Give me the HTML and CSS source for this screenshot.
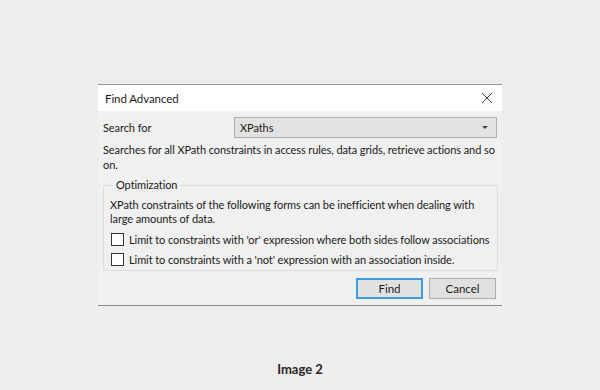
FILE: index.html
```html
<!DOCTYPE html>
<html lang="en">

<head>
    <meta charset="utf-8">
    <title>Find Advanced</title>
    <link rel="stylesheet" href="styles.css">
</head>

<body>
    <div class="dialog">
        <div class="title-bar">
            <span>Find Advanced</span>
            <svg class="close-icon" width="12" height="12" viewBox="0 0 12 12">
                <path d="M1 1 L11 11 M11 1 L1 11" stroke="#444" stroke-width="1" fill="none" />
            </svg>
        </div>
        <div class="dialog-body">
            <div class="search-row">
                <span class="search-label">Search for</span>
                <div class="combo">
                    <span>XPaths</span>
                    <span class="combo-arrow"></span>
                </div>
            </div>
            <p class="description">Searches for all XPath constraints in access rules, data grids, retrieve actions and so on.</p>
            <fieldset class="group">
                <legend>Optimization</legend>
                <p class="group-text">XPath constraints of the following forms can be inefficient when dealing with large amounts of data.</p>
                <label class="check-row"><span class="check-box"></span>Limit to constraints with 'or' expression where both sides follow associations</label>
                <label class="check-row"><span class="check-box"></span>Limit to constraints with a 'not' expression with an association inside.</label>
            </fieldset>
            <div class="buttons">
                <button class="btn btn-default">Find</button>
                <button class="btn">Cancel</button>
            </div>
        </div>
    </div>
    <div class="caption">Image 2</div>
</body>

</html>
```

FILE: styles.css
```css
body,
html {
    padding: 0;
    margin: 0;
    height: 100%;
    background-color: #eeedeb;
    font-family: Lato, "Noto Sans", sans-serif;
}

.dialog {
    width: 404px;
    height: 222px;
    margin: 84px 0 0 98px;
    background-color: #f0f0f0;
    border-top: 1px solid #9a9a9a;
    border-bottom: 1px solid #8a8a8a;
    font-size: 11px;
    letter-spacing: -0.08px;
    color: #1a1a1a;
    box-sizing: border-box;
}

.title-bar {
    height: 26px;
    background-color: #ffffff;
    display: flex;
    align-items: center;
    justify-content: space-between;
    padding: 0 9px 0 7px;
    font-size: 11.5px;
}

.close-icon {
    display: block;
}

.dialog-body {
    padding: 6px 5px 0 5px;
}

.search-row {
    display: flex;
    align-items: center;
    height: 21px;
}

.search-label {
    width: 131px;
}

.combo {
    flex: 1;
    height: 21px;
    box-sizing: border-box;
    border: 1px solid #adadad;
    background-color: #e2e2e2;
    display: flex;
    align-items: center;
    justify-content: space-between;
    padding: 0 8px 0 5px;
}

.combo-arrow {
    width: 0;
    height: 0;
    border-left: 3px solid transparent;
    border-right: 3px solid transparent;
    border-top: 3px solid #444;
}

.description {
    margin: 4px 0 0 0;
    line-height: 15px;
    width: 396px;
}

.group {
    margin: 6px 0 0 0;
    padding: 0 6px 1px 6px;
    border: 1px solid #dcdcdc;
    border-radius: 2px;
    box-sizing: border-box;
    width: 395px;
}

.group legend {
    padding: 0 3px;
    margin-left: 3px;
    line-height: 14px;
}

.group-text {
    margin: 6px 0 0 0;
    line-height: 14px;
}

.check-row {
    display: flex;
    align-items: center;
    gap: 5px;
    height: 20px;
    margin-left: 1px;
    white-space: nowrap;
}

.check-row:first-of-type {
    margin-top: 3px;
}

.check-box {
    width: 13px;
    height: 13px;
    box-sizing: border-box;
    border: 1px solid #333;
    background-color: #ffffff;
}

.buttons {
    display: flex;
    justify-content: flex-end;
    gap: 6px;
    margin-top: 7px;
    width: 393px;
}

.btn {
    width: 67px;
    height: 21px;
    font-family: inherit;
    font-size: 11.5px;
    color: #1a1a1a;
    background-color: #e1e1e1;
    border: 1px solid #adadad;
    padding: 0;
}

.btn-default {
    border: 1px solid #3d9be2;
    box-shadow: inset 0 0 0 1px #3d9be2;
}

.caption {
    text-align: center;
    margin-top: 55px;
    font-size: 13px;
    font-weight: bold;
    color: #262626;
}
```
